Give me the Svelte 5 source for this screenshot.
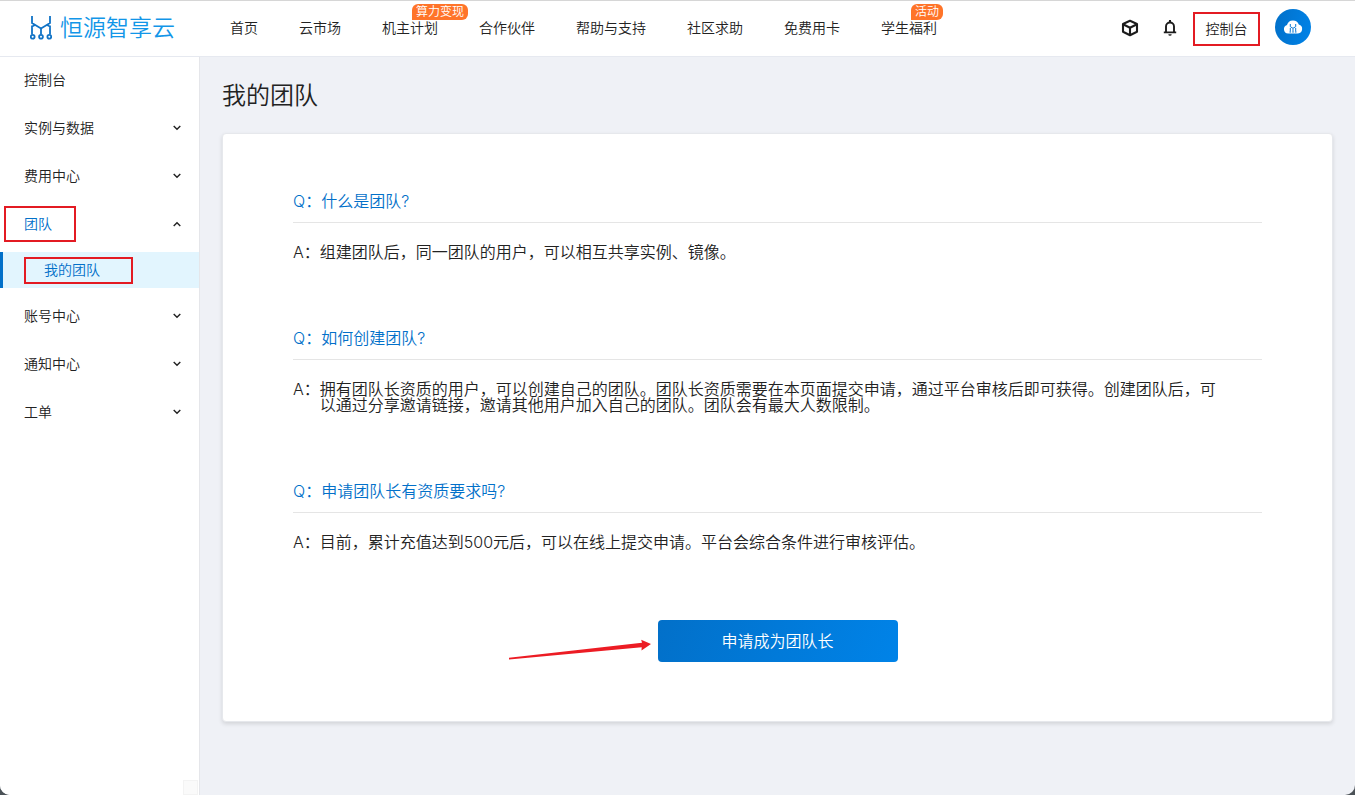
<script lang="ts">
	type NavItem = { label: string; tag?: string }
	type MenuItem = {
		label: string
		children?: string[]
		leaf?: boolean
	}

	const nav: NavItem[] = [
		{ label: '首页' },
		{ label: '云市场' },
		{ label: '机主计划', tag: '算力变现' },
		{ label: '合作伙伴' },
		{ label: '帮助与支持' },
		{ label: '社区求助' },
		{ label: '免费用卡' },
		{ label: '学生福利', tag: '活动' },
	]

	const menu: MenuItem[] = [
		{ label: '控制台', leaf: true },
		{ label: '实例与数据' },
		{ label: '费用中心' },
		{ label: '团队', children: ['我的团队'] },
		{ label: '账号中心' },
		{ label: '通知中心' },
		{ label: '工单' },
	]

	const faqs = [
		{
			q: '什么是团队?',
			a: '组建团队后，同一团队的用户，可以相互共享实例、镜像。',
		},
		{
			q: '如何创建团队?',
			a: '拥有团队长资质的用户，可以创建自己的团队。团队长资质需要在本页面提交申请，通过平台审核后即可获得。创建团队后，可以通过分享邀请链接，邀请其他用户加入自己的团队。团队会有最大人数限制。',
		},
		{
			q: '申请团队长有资质要求吗?',
			a: '目前，累计充值达到500元后，可以在线上提交申请。平台会综合条件进行审核评估。',
		},
	]

	let opened = $state('团队')

	function toggle(label: string) {
		opened = opened === label ? '' : label
	}
</script>

<div class="page">
	<header class="header">
		<a class="logo" href="#home">
			<svg width="22" height="24" viewBox="0 0 22 24" fill="none" stroke="#1173c6" stroke-width="1.8">
				<path d="M2 0v7l9 5.500 9-5.500V0M2 9.500v9M11 12.500v6M20 9.500v9M2 10.500l3-1.500M20 10.500l-3-1.500" />
				<circle cx="2.700" cy="20.700" r="1.900" />
				<circle cx="11" cy="20.700" r="1.900" />
				<circle cx="19.300" cy="20.700" r="1.900" />
			</svg>
			<span>恒源智享云</span>
		</a>
		<nav class="nav">
			{#each nav as item}
				<a href="#nav">
					{item.label}
					{#if item.tag}
						<span class="tag">{item.tag}</span>
					{/if}
				</a>
			{/each}
		</nav>
		<div class="tools">
			<button class="icon" aria-label="box">
				<svg width="18" height="18" viewBox="0 0 18 18" fill="none" stroke="#1c1c1c" stroke-width="2.1" stroke-linejoin="round">
					<path d="M9 1.700l7 3.300v7.700l-7 3.600-7-3.600V5z" />
					<path d="M2 5.200l7 3.600 7-3.600M9 8.800v7.500" />
				</svg>
			</button>
			<button class="icon" aria-label="bell">
				<svg width="14" height="18" viewBox="0 0 14 18">
					<path d="M3 13V7.500a4 4 0 0 1 8 0V13" fill="none" stroke="#1c1c1c" stroke-width="1.900" />
					<path d="M.8 12.500h12.400v1.800H.8zM6 1h2v2.500H6zM5.300 15.300h3.400a1.700 1.500 0 0 1-3.400 0z" fill="#1c1c1c" />
				</svg>
			</button>
			<a class="console" href="#console">控制台</a>
			<button class="avatar" aria-label="user">
				<svg width="20" height="16" viewBox="0 0 20 16">
					<path d="M5 14.500a4.300 4.300 0 0 1-1-8.400A6.200 6.200 0 0 1 15.800 5.500 4.600 4.600 0 0 1 15 14.500z" fill="#fff" />
					<path d="M7.300 5v2.700L10 9.300l2.700-1.600V5M7.300 9v3.500M10 9.500v3M12.700 9v3.500" fill="none" stroke="#0b78d2" stroke-width="1" />
					<path d="M6.500 13h1.600M9.200 13h1.600M11.900 13h1.600" stroke="#0b78d2" stroke-width="1.200" />
				</svg>
			</button>
		</div>
	</header>

	<div class="body">
		<aside class="side">
			{#each menu as item}
				<button
					class="item"
					class:active={item.children}
					onclick={() => toggle(item.label)}
				>
					<span class:mark={item.children}>{item.label}</span>
					{#if !item.leaf}
						<svg
							class:up={opened === item.label}
							width="8"
							height="6"
							viewBox="0 0 8 6"
							fill="none"
							stroke="#222"
							stroke-width="1.400"
						>
							<path d="M.7 1l3.300 3.300L7.300 1" />
						</svg>
					{/if}
				</button>
				{#if item.children && opened === item.label}
					<div class="sub">
						{#each item.children as child}
							<a href="#team"><span>{child}</span></a>
						{/each}
					</div>
				{/if}
			{/each}
			<div class="corner"></div>
		</aside>

		<main class="main">
			<h1>我的团队</h1>
			<section class="card">
				{#each faqs as faq}
					<article>
						<h2><span>Q：</span><span>{faq.q}</span></h2>
						<div class="answer"><span>A：</span><p>{faq.a}</p></div>
					</article>
				{/each}
				<div class="action">
					<button class="apply">申请成为团队长</button>
					<svg class="arrow" width="144" height="24" viewBox="0 0 144 24" fill="#ec1c24">
						<path d="M1 21.800L134 6.700l-.8-3L143 8l-9.500 6.500.2-3.300L1 23.500z" />
					</svg>
				</div>
			</section>
		</main>
	</div>
</div>

<style>
	:global(body) {
		background: #4b5257;
	}
	.page {
		display: flex;
		flex-direction: column;
		min-height: 100vh;
		border-radius: 0 0 10px 10px;
		overflow: hidden;
		background: #eff1f6;
		color: #222;
		font-family: Inter, 'Noto Sans CJK SC', sans-serif;
		font-size: 14px;
		font-weight: 350;
	}
	.page,
	.page * {
		box-sizing: border-box;
	}
	a {
		color: inherit;
		text-decoration: none;
	}
	button {
		padding: 0;
		border: 0;
		background: none;
		color: inherit;
		font: inherit;
		cursor: pointer;
	}
	svg {
		display: block;
	}
	.header {
		position: relative;
		z-index: 1;
		display: flex;
		align-items: center;
		height: 56px;
		padding: 0 44px 0 30px;
		border-top: 1px solid #d6d6d6;
		background: #fff;
		box-shadow: 0 1px #e6e9f0;
	}
	.logo {
		display: flex;
		align-items: center;
		gap: 8px;
		width: 200px;
		padding-bottom: 2px;
		color: #1296e8;
		font-size: 23px;
		line-height: 32px;
	}
	.nav {
		display: flex;
		gap: 41px;
		padding-bottom: 2px;
		white-space: nowrap;
	}
	.nav a {
		position: relative;
		line-height: 20px;
	}
	.tag {
		position: absolute;
		top: -14px;
		left: 30px;
		padding: 0 4px;
		border-radius: 6px 6px 6px 0;
		background: #ff7429;
		color: #fff;
		font-size: 12px;
		line-height: 16px;
	}
	.tools {
		display: flex;
		align-items: center;
		margin-left: auto;
	}
	.icon {
		margin-right: 24px;
		padding-bottom: 2px;
	}
	.icon + .icon {
		margin-right: 16px;
	}
	.console {
		height: 34px;
		width: 67px;
		border: 2px solid #e31b23;
		line-height: 30px;
		text-align: center;
	}
	.avatar {
		display: flex;
		align-items: center;
		justify-content: center;
		width: 36px;
		height: 36px;
		margin: 0 0 4px 15px;
		border-radius: 50%;
		background: linear-gradient(100deg, #0270c9, #0083e8);
	}
	.body {
		display: flex;
		flex: 1;
	}
	.side {
		display: flex;
		flex-direction: column;
		flex: none;
		width: 200px;
		border-right: 1px solid #e5e6ea;
		background: #fff;
	}
	.item {
		display: flex;
		align-items: center;
		justify-content: space-between;
		height: 48px;
		padding: 0 18px 0 24px;
	}
	.item span {
		padding-bottom: 2px;
	}
	.active {
		color: #0270c9;
	}
	.up {
		transform: rotate(180deg);
	}
	.mark {
		position: relative;
	}
	.mark::after {
		content: '';
		position: absolute;
		inset: -7px -24px -7px -20px;
		border: 2px solid #e31b23;
	}
	.sub {
		padding: 4px 0;
	}
	.sub a {
		display: flex;
		align-items: center;
		height: 36px;
		padding-left: 21px;
		border-left: 3px solid #0270c9;
		background: #e2f5fe;
		color: #0270c9;
	}
	.sub span {
		width: 109px;
		padding: 0 0 2px 18px;
		border: 2px solid #e31b23;
		line-height: 21px;
	}
	.corner {
		width: 15px;
		height: 15px;
		margin: auto 1px 0 auto;
		border: 1px solid #f3f3f3;
		background: #fafafa;
	}
	.main {
		flex: 1;
		min-width: 0;
		padding: 22px 22px 72px;
	}
	h1 {
		margin: 0 0 19px;
		font-size: 24px;
		font-weight: 350;
		line-height: 36px;
	}
	.card {
		padding: 59px 70px;
		border: 1px solid #e6e8ec;
		border-radius: 4px;
		background: #fff;
		box-shadow: 0 2px 4px rgba(0, 0, 0, 0.12);
		font-size: 16px;
		line-height: 16px;
	}
	article {
		margin-bottom: 70px;
	}
	h2 {
		display: flex;
		margin: 0 0 21px;
		padding-bottom: 13px;
		border-bottom: 1px solid #e5e5e5;
		color: #0270c9;
		font-size: 16px;
		font-weight: 350;
	}
	.answer {
		display: flex;
		padding-right: 36px;
	}
	.answer span {
		flex: none;
	}
	.answer p {
		margin: 0;
	}
	.action {
		position: relative;
		width: 240px;
		margin: 0 auto;
	}
	.apply {
		width: 100%;
		height: 42px;
		border-radius: 4px;
		background: linear-gradient(110deg, #0270c9, #0083e8);
		color: #fff;
	}
	.arrow {
		position: absolute;
		top: 16px;
		right: 246px;
	}
</style>
